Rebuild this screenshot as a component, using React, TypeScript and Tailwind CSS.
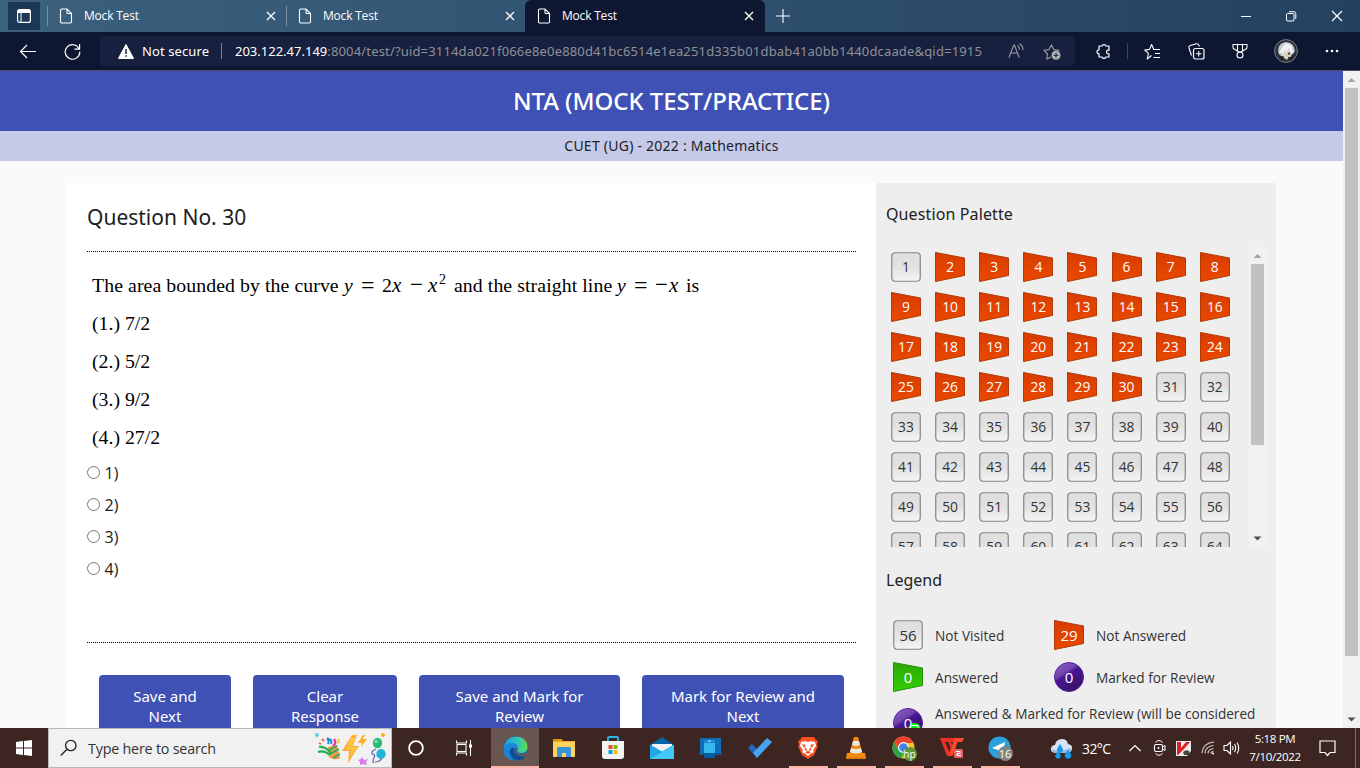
import React from "react";

const UI = "font-['Open_Sans','Noto_Sans',sans-serif]";
const NOTO = "font-['Noto_Sans','Open_Sans',sans-serif]";

type IconProps = { w: number; h: number; className?: string; children: React.ReactNode };

function Icon({ w, h, className = "", children }: IconProps) {
  return (
    <svg width={w} height={h} viewBox={`0 0 ${w} ${h}`} fill="none" className={`shrink-0 ${className}`}>
      {children}
    </svg>
  );
}

function Close() {
  return (
    <Icon w={10} h={10}>
      <path d="M1 1l8 8M9 1l-8 8" stroke="#fff" strokeWidth="1.3" />
    </Icon>
  );
}

function Tab({ active = false }: { active?: boolean }) {
  return (
    <div
      className={`flex h-8 items-center ${
        active ? "w-[240px] rounded-t-md bg-[#0e1731] pl-3 pr-[11px]" : "w-[239px] pl-3 pr-[10px]"
      }`}
    >
      <Icon w={14} h={16}>
        <path d="M1.5 2.2q0-1.2 1.2-1.2H8l4.5 4.5v8.3q0 1.2-1.2 1.2H2.7q-1.2 0-1.2-1.2zM8 1v3.5q0 1 1 1h3.5" stroke="#fff" strokeWidth="1.1" />
      </Icon>
      <span className={`ml-[11px] flex-1 whitespace-nowrap text-[12px] tracking-[-0.2px] text-white ${UI}`}>Mock Test</span>
      <Close />
    </div>
  );
}

function TabSeparator() {
  return <div className="-ml-px h-5 w-px self-center bg-[#7890a3]" />;
}

function TabStrip() {
  return (
    <div className="flex h-8 items-center bg-gradient-to-r from-[#3b617e] to-[#244260]">
      <div className="mb-0.5 ml-2 flex h-7 w-8 items-center justify-center self-end bg-[#1b3857]">
        <Icon w={14} h={14}>
          <rect x=".6" y=".6" width="12.8" height="12.8" rx="2" stroke="#fff" strokeWidth="1.2" />
          <path d="M1 1h12v3H1z" fill="#fff" />
          <path d="M4 4v9" stroke="#fff" />
        </Icon>
      </div>
      <div className="ml-[7px] flex items-center">
        <div className="-mr-px h-5 w-px bg-[#7890a3]" />
        <Tab />
        <div className="-mr-px h-5 w-px bg-[#7890a3]" />
        <Tab />
        <Tab active />
      </div>
      <Icon w={14} h={14} className="ml-[11px]">
        <path d="M7 0v14M0 7h14" stroke="#fff" strokeWidth="1.1" />
      </Icon>
      <div className="ml-auto flex items-center pr-[17px]">
        <Icon w={10} h={12} className="mr-[35px]">
          <path d="M0 6.5h10" stroke="#fff" />
        </Icon>
        <Icon w={11} h={11} className="mr-[34px]">
          <rect x=".5" y="2.5" width="7.5" height="7.5" rx="1" stroke="#fff" />
          <path d="M3 .7h4.8q2 0 2 2V8" stroke="#fff" />
        </Icon>
        <Icon w={12} h={12}>
          <path d="M1 1l10 10M11 1L1 11" stroke="#fff" strokeWidth="1.2" />
        </Icon>
      </div>
    </div>
  );
}

function AddressBar() {
  return (
    <div className="flex h-[30px] w-[975px] items-center rounded bg-[#17213f]">
      <Icon w={16} h={15} className="ml-[18px]">
        <path d="M8 .5L15.6 14.5H.4z" fill="#fff" stroke="#fff" strokeLinejoin="round" />
        <path d="M8 5v5M8 11.3v1.5" stroke="#17213f" strokeWidth="1.5" />
      </Icon>
      <span className={`ml-2 w-[67px] whitespace-nowrap pt-px text-[13px] tracking-[0.1px] text-white ${NOTO}`}>Not secure</span>
      <div className="ml-3 h-4 w-px bg-[#7a8092]" />
      <span className={`ml-[13px] w-[748px] whitespace-nowrap pt-px text-[13px] tracking-[0.165px] text-[#8f9098] ${NOTO}`}>
        <span className="tracking-normal text-white">203.122.47.149</span>
        :8004/test/?uid=3114da021f066e8e0e880d41bc6514e1ea251d335b01dbab41a0bb1440dcaade&amp;qid=1915
      </span>
      <Icon w={17} h={16} className="ml-[25px]">
        <path d="M1 14.5L5.8 2h.6l4.8 12.5M2.8 10h6.5M9.5 2.5q2 1.500 2 4M11.500 .8q3.500 2.200 3.500 6.200" stroke="#9a9ca3" strokeWidth="1.1" />
      </Icon>
      <Icon w={18} h={18} className="ml-[18px]">
        <path d="M8 15l-4.300 2 .8-5L1 8.300l4.900-.7L8.500 3l2.300 4.600 5 .7-1.300 1" stroke="#9a9ca3" strokeWidth="1.1" strokeLinejoin="round" />
        <circle cx="13" cy="13.300" r="4.500" fill="#b1b1b5" />
        <path d="M13 10.800v5M10.500 13.300h5" stroke="#17213f" />
      </Icon>
    </div>
  );
}

function Toolbar() {
  return (
    <div className="flex h-[39px] items-center border-b border-[#4b5060] bg-[#0e1731]">
      <Icon w={17} h={15} className="ml-[19px]">
        <path d="M17 7.500H1.500M8 1L1.500 7.500 8 14" stroke="#fff" strokeWidth="1.200" />
      </Icon>
      <Icon w={17} h={17} className="ml-7">
        <path d="M15.200 6A7.300 7.300 0 1 0 15.800 8.700M15.600 1v5.200h-5.200" stroke="#fff" strokeWidth="1.200" />
      </Icon>
      <div className="ml-[19px]">
        <AddressBar />
      </div>
      <Icon w={16} h={17} className="ml-5">
        <path
          d="M4 3h3.100a2 2 0 0 1 3.800 0H14v4.200h-.7a1.800 1.800 0 0 0 0 3.600H14V14h-3.200a1.900 1.900 0 0 1-3.700 0H4v-3.200a2 2 0 0 1 0-4z"
          stroke="#fff" strokeWidth="1.200" strokeLinejoin="round"
        />
      </Icon>
      <div className="ml-4 h-4 w-px bg-[#3b425b]" />
      <Icon w={17} h={17} className="ml-4">
        <path d="M7.500 12.500L3.200 16l1.200-5.600L.8 7l4.700-.6L7.600 1.500l2 4.400M9 6.500h7M11 10.500h5M9.500 14.500H16" stroke="#fff" strokeWidth="1.100" strokeLinejoin="round" />
      </Icon>
      <Icon w={17} h={17} className="ml-[27px]">
        <rect x="5.500" y="5.500" width="10.500" height="10.500" rx="2" stroke="#fff" strokeWidth="1.200" />
        <path d="M10.750 8v5.500M8 10.750h5.500M3.500 12.500L1 5q-.5-1.800 1.200-2.500L8.500.8q1.800-.3 2.500 1.700l.3 1" stroke="#fff" strokeWidth="1.100" />
      </Icon>
      <Icon w={16} h={16} className="ml-[27px]">
        <path d="M1 1.500h14v3q0 1-1 1.500L8 9.500 2 6Q1 5.500 1 4.500zM5.500 1.500v6M10.500 1.500v6" stroke="#fff" strokeWidth="1.100" strokeLinejoin="round" />
        <circle cx="8" cy="12" r="3" stroke="#fff" strokeWidth="1.100" />
      </Icon>
      <Icon w={24} h={24} className="ml-[26px]">
        <circle cx="12" cy="12" r="11.400" fill="#2a333b" stroke="#7d7f83" />
        <path d="M4 12q0-8 8-9 8 .5 9 9l-3 3-1 3-10-1-2-2z" fill="#c3c8ca" />
        <path d="M9 12q4-3 7 0l-1 5-2 4-3-2z" fill="#d9cfba" />
        <path d="M11 4L6 12l-1 3 3-2 1 4 2-6 2 4 1-6 3 6 3-1-3-8z" fill="#eeeff0" />
        <path d="M14 15l2-1" stroke="#4b2e28" strokeWidth="1.500" />
        <path d="M5 17l3 1 1 4zM18 17l-3 5 4-3z" fill="#141a1f" />
      </Icon>
      <Icon w={14} h={4} className="ml-[27px]">
        <circle cx="2" cy="2" r="1.300" fill="#fff" />
        <circle cx="7" cy="2" r="1.300" fill="#fff" />
        <circle cx="12" cy="2" r="1.300" fill="#fff" />
      </Icon>
    </div>
  );
}

type Kind = "plain" | "red" | "green" | "violet";

function Badge({ kind, value, tick = false, large = false }: { kind: Kind; value: number; tick?: boolean; large?: boolean }) {
  return (
    <div className="relative h-[30px] w-[30px]">
      <svg width="30" height="30" viewBox="0 0 30 30" className="absolute inset-0">
        <defs>
          <linearGradient id="gPlain" x1="0" y1="0" x2="0" y2="1">
            <stop offset="0" stopColor="#dedede" />
            <stop offset=".5" stopColor="#e2e2e2" />
            <stop offset="1" stopColor="#f4f4f4" />
          </linearGradient>
          <linearGradient id="gRed" x1="0" y1="0" x2="0" y2="1">
            <stop offset="0" stopColor="#d83c00" />
            <stop offset="1" stopColor="#ea4900" />
          </linearGradient>
          <linearGradient id="gGreen" x1="0" y1="0" x2="0" y2="1">
            <stop offset="0" stopColor="#2da804" />
            <stop offset="1" stopColor="#32cf04" />
          </linearGradient>
          <linearGradient id="gViolet" x1="0" y1="0" x2=".65" y2="1">
            <stop offset="0" stopColor="#8d68c4" />
            <stop offset=".4" stopColor="#7243ad" />
            <stop offset=".5" stopColor="#481493" />
            <stop offset="1" stopColor="#381464" />
          </linearGradient>
        </defs>
        {kind === "plain" && <rect x=".75" y=".75" width="28.500" height="28.500" rx="3.500" fill="url(#gPlain)" stroke="#868686" strokeWidth="1.200" />}
        {kind === "red" && <path d="M.5.5L29.500 6v17.500L.5 29.500z" fill="url(#gRed)" stroke="#b03904" />}
        {kind === "green" && <path d="M.5.5L29.500 6v17.500L.5 29.500z" fill="url(#gGreen)" stroke="#249306" />}
        {kind === "violet" && <circle cx="15" cy="15" r="14.500" fill="url(#gViolet)" stroke="#5420ab" />}
        {tick && (
          <g>
            <ellipse cx="21.500" cy="20" rx="6" ry="5" fill="#05ee13" />
            <path d="M19 17.500h6v3h-6" stroke="#fff" fill="none" />
          </g>
        )}
      </svg>
      <span
        className={`absolute inset-0 flex items-center justify-center ${large ? "text-[15px]" : "pt-px text-[13.800px]"} ${UI} ${
          kind === "plain" ? "text-[#333]" : "font-medium text-white"
        }`}
      >
        {value}
      </span>
    </div>
  );
}

function Arrow({ up = false, dark = false }: { up?: boolean; dark?: boolean }) {
  return (
    <Icon w={17} h={17}>
      <path d={up ? "M4.500 11h8L8.500 7z" : "M4.500 6.500h8l-4 4z"} fill={dark ? "#505050" : "#a3a3a3"} />
    </Icon>
  );
}

function Question() {
  const buttons = [
    { first: "Save and", second: "Next", width: "w-[132px]" },
    { first: "Clear", second: "Response", width: "w-[144px]" },
    { first: "Save and Mark for", second: "Review", width: "w-[201px]" },
    { first: "Mark for Review and", second: "Next", width: "w-[202px]" },
  ];
  return (
    <section className="h-[560px] w-[809px] bg-white px-5">
      <h2 className={`flex h-[68px] items-center text-[21px] leading-7 text-[#212121] ${NOTO}`}>
        <span className="whitespace-nowrap">Question No. 30</span>
      </h2>
      <div className="border-t border-dotted border-black" />
      <div className="flex flex-col pb-px pl-[5px] pt-[14px] font-['Liberation_Serif','Times_New_Roman',serif] text-[19.800px] leading-[38px] text-black">
        <p className="flex whitespace-nowrap">
          <span className="w-[252px] tracking-[0.080px]">The area bounded by the curve</span>
          <i className="w-[17px]">y</i>
          <span className="w-[21px] text-[24px]">=</span>
          <span className="w-[10px]">2</span>
          <i className="w-[18px] text-[21px]">x</i>
          <span className="w-[18px] text-[23px]">−</span>
          <i className="w-[11px] text-[21px]">x</i>
          <span className="w-[15px] pb-[10px] text-[14px] leading-[28px]">2</span>
          <span className="w-[163px] tracking-[0.080px]">and the straight line</span>
          <i className="w-[17px]">y</i>
          <span className="w-[21px] text-[24px]">=</span>
          <span className="w-[14px] text-[23px]">−</span>
          <i className="w-[17px] text-[21px]">x</i>
          <span>is</span>
        </p>
        <p>(1.) 7/2</p>
        <p>(2.) 5/2</p>
        <p>(3.) 9/2</p>
        <p>(4.) 27/2</p>
      </div>
      <div className="-mt-px h-[186px]">
        {[1, 2, 3, 4].map((n) => (
          <label key={n} className={`flex h-8 items-center text-[16px] text-[#212121] ${UI}`}>
            <span className="mr-[4.500px] h-[13px] w-[13px] rounded-full border border-[#767676] bg-white" />
            <span className="pt-0.5">{n})</span>
          </label>
        ))}
      </div>
      <div className="border-t border-dotted border-black" />
      <div className="flex justify-between pl-3 pr-3 pt-8">
        {buttons.map((b) => (
          <button
            key={b.first}
            className={`flex h-16 flex-col items-center rounded bg-[#3f51b5] pt-[11px] text-[15px] leading-5 text-white ${b.width} ${NOTO}`}
          >
            <span className="whitespace-nowrap">{b.first}</span>
            <span>{b.second}</span>
          </button>
        ))}
      </div>
    </section>
  );
}

function LegendItem({ kind, value, label }: { kind: Kind; value: number; label: string }) {
  return (
    <div className="flex h-[42px] items-center gap-3">
      <Badge kind={kind} value={value} large />
      <span className="whitespace-nowrap pt-0.5 text-[13.650px] text-[#333]">{label}</span>
    </div>
  );
}

function Palette() {
  return (
    <aside className={`h-[560px] w-[400px] bg-[#eee] ${UI}`}>
      <h3 className={`flex h-16 items-center pb-0.5 pl-[10px] text-[16px] tracking-[0.120px] text-[#212121] ${NOTO}`}>Question Palette</h3>
      <div className="flex h-[300px] overflow-hidden pl-[15px]">
        <div className="grid w-[352.900px] shrink-0 auto-rows-[40px] grid-cols-8 pt-[5px]">
          {Array.from({ length: 64 }, (_, i) => i + 1).map((n) => (
            <Badge key={n} value={n} kind={n >= 2 && n <= 30 ? "red" : "plain"} />
          ))}
        </div>
        <div className="ml-[5px] flex h-[300px] w-[17px] flex-col items-center bg-[#f1f1f1]">
          <Arrow up />
          <div className="h-[181px] w-[13px] bg-[#c1c1c1]" />
          <div className="mt-auto">
            <Arrow dark />
          </div>
        </div>
      </div>
      <h3 className={`flex h-[67px] items-center pb-0.5 pl-[10px] text-[16px] text-[#212121] ${NOTO}`}>Legend</h3>
      <div className="flex pl-[17px]">
        <div className="w-[161px]">
          <LegendItem kind="plain" value={56} label="Not Visited" />
          <LegendItem kind="green" value={0} label="Answered" />
        </div>
        <div>
          <LegendItem kind="red" value={29} label="Not Answered" />
          <LegendItem kind="violet" value={0} label="Marked for Review" />
        </div>
      </div>
      <div className="flex gap-3 pl-[17px] pt-[5px]">
        <div className="pt-[5px]">
          <Badge kind="violet" value={0} tick large />
        </div>
        <p className="whitespace-nowrap pt-px text-[13.620px] leading-5 text-[#333]">
          Answered &amp; Marked for Review (will be considered
          <br />
          for evaluation)
        </p>
      </div>
    </aside>
  );
}

function Page() {
  return (
    <div className="flex h-[657px] overflow-hidden bg-[#fafafa]">
      <div className="w-[1343px]">
        <header className={`flex h-[60px] items-center justify-center bg-[#3f51b5] text-[24px] font-medium tracking-[-0.060px] text-white ${NOTO}`}>
          <span className="whitespace-nowrap">NTA (MOCK TEST/PRACTICE)</span>
        </header>
        <div className={`flex h-[30px] items-center justify-center bg-[#c5cae9] pb-0.5 text-[14px] tracking-[0.240px] text-[#212121] ${NOTO}`}>
          CUET (UG) - 2022 : Mathematics
        </div>
        <main className="flex pl-[67px] pt-[22px]">
          <Question />
          <Palette />
        </main>
      </div>
      <div className="flex w-[17px] flex-col items-center bg-[#f1f1f1]">
        <Arrow up />
        <div className="h-[568px] w-[13px] bg-[#c1c1c1]" />
        <div className="mt-auto">
          <Arrow dark />
        </div>
      </div>
    </div>
  );
}

function AppSlot({ children, running = false, active = false, spaced = false }: { children: React.ReactNode; running?: boolean; active?: boolean; spaced?: boolean }) {
  return (
    <div className={`flex h-10 w-12 flex-col items-center ${active ? "bg-[#695650]" : ""} ${spaced ? "ml-px" : ""}`}>
      <div className="flex h-[38px] items-center justify-center pt-0.5">{children}</div>
      {running && <div className={`h-0.5 bg-[#ffb5a7] ${active ? "w-12" : "w-[39px]"}`} />}
    </div>
  );
}

function PartyArt() {
  return (
    <Icon w={72} h={36}>
      <path d="M14 17l9-2 3 13q-5 3-11-1z" fill="#ef9b38" />
      <path d="M15 20l8-4M16 24l9-5M19 28l7-4" stroke="#23a97c" strokeWidth="1.500" />
      <path d="M5 17q5-1 9 3l3 3M4 22q6-2 12 3" stroke="#22b14c" strokeWidth="2.200" />
      <path d="M13 8q3 1 1 6M13 10q6-2 4 4" stroke="#2389dd" strokeWidth="2" />
      <path d="M19 16q4-3 1-7" stroke="#ee3f98" strokeWidth="2.300" />
      <path d="M8 9l2 2M5 13l2 1" stroke="#f35d57" strokeWidth="1.800" />
      <path d="M24 9l1 2M23 13l3-1" stroke="#f7c52b" strokeWidth="1.800" />
      <circle cx="3" cy="5" r="2" fill="#5ecce4" />
      <path d="M38 5L28 21h7l-1 12 11-17h-6l4-11z" fill="#ffac2f" />
      <path d="M37 8h5l-4 9h5l-7 10 2-7h-6z" fill="#ffc545" />
      <path d="M49 5l-5 8h4l-1 4 6-8h-4l2-4z" fill="#ffad26" />
      <path d="M48 27l2 3 4-1-2 3 1 3-4-1-3 1v-3l-2-2 3-1z" fill="#db7af0" />
      <path d="M62 19q-5 2-4 5 4 0 2 4t0 5M68 28q-2 4-7 4" stroke="#6657b8" strokeWidth="1.200" />
      <ellipse cx="63.500" cy="13" rx="4.700" ry="5.200" fill="#29bd77" />
      <ellipse cx="67" cy="24" rx="4.700" ry="5" fill="#20b5d8" />
      <circle cx="62" cy="11.500" r="1.600" fill="#9fe4bd" />
      <circle cx="69" cy="5" r="2" fill="#ffab19" />
    </Icon>
  );
}

function Taskbar() {
  return (
    <div className={`flex h-10 items-center bg-[#3d2622] text-white ${UI}`}>
      <div className="flex w-12 justify-center">
        <Icon w={16} h={16}>
          <path d="M0 2l7-1v6.500H0zM8 .9L16 0v7.500H8zM0 8.500h7V15l-7-1zM8 8.500h8V16l-8-.9z" fill="#fff" />
        </Icon>
      </div>
      <div className="flex h-10 w-[344px] items-center border border-[#b9b9b9] bg-[#f1f1f1] pl-[11px]">
        <Icon w={18} h={18}>
          <circle cx="10.800" cy="6.500" r="5.200" stroke="#222" strokeWidth="1.300" />
          <path d="M7 10.200L.8 16.500" stroke="#222" strokeWidth="1.300" />
        </Icon>
        <span className="ml-[10px] w-[129px] whitespace-nowrap pt-px text-[14.300px] tracking-[-0.200px] text-[#333]">Type here to search</span>
        <div className="ml-auto pr-[5px]">
          <PartyArt />
        </div>
      </div>
      <div className="flex">
        <AppSlot>
          <Icon w={18} h={18}>
            <circle cx="9" cy="9" r="6.900" stroke="#fff" strokeWidth="1.800" />
          </Icon>
        </AppSlot>
        <AppSlot>
          <Icon w={18} h={18}>
            <path d="M1.500 1.500V4h10V1.500M1.500 16.500V14h10v2.500" stroke="#fff" strokeWidth="1.100" />
            <rect x="2" y="5.500" width="9" height="7" stroke="#fff" strokeWidth="1.100" />
            <path d="M15.500 1v16" stroke="#fff" strokeWidth="1.100" />
            <path d="M14 5.500h3v3h-3z" fill="#fff" />
          </Icon>
        </AppSlot>
        <div className="ml-[3px] flex">
          <AppSlot running active>
            <Icon w={25} h={25}>
              <defs>
                <linearGradient id="edgeTop" x1="0" y1="0" x2="1" y2="0">
                  <stop stopColor="#1f9ee0" />
                  <stop offset=".55" stopColor="#2ac3c4" />
                  <stop offset="1" stopColor="#62dc4d" />
                </linearGradient>
              </defs>
              <circle cx="12.500" cy="12.500" r="12" fill="#1268b8" />
              <path d="M1 10Q4 .5 13 .5 24 1 24.500 11q0 6-7 6-4-.5-3-3 1-5-5-5-6 0-8.500 6z" fill="url(#edgeTop)" />
              <path d="M.500 12Q3 7 9 7q6 0 6 6l-1 2q-1-4-5-3-5 2-2 8 1 3 4 4.500Q0 23 .500 12z" fill="#1b86d6" />
              <path d="M9 12q-3 2-1 6 2 6 9 6 4-1 6-4-7 2-11-2-2-2-1-6z" fill="#114a8b" />
              <path d="M13 11.500q2 2 .8 4 1 2.500 5 2.500 2 0 5.500-1.500l1 2-2 1.500q-7 1-10-2.500-2-3-.3-6z" fill="#695650" />
            </Icon>
          </AppSlot>
          <AppSlot spaced>
            <Icon w={24} h={20}>
              <path d="M1 1h8l2 2h12v16H1z" fill="#f2ae22" />
              <path d="M1 4h22v15H1z" fill="#ffd35e" />
              <path d="M1 1h8l2 2H1z" fill="#dc9510" />
              <path d="M5 19v-9q0-1 1-1h12q1 0 1 1v9h-5v-4h-4v4z" fill="#3995d9" />
            </Icon>
          </AppSlot>
          <AppSlot spaced>
            <Icon w={24} h={24}>
              <path d="M7 6V2q0-1 1-1h8q1 0 1 1v4" stroke="#2ab6e8" strokeWidth="1.800" />
              <path d="M1 5h22v15q0 3-3 3H4q-3 0-3-3z" fill="#f3f3f3" />
              <path d="M7.500 9h4v4h-4z" fill="#f04e24" />
              <path d="M12.500 9h4v4h-4z" fill="#7cb90a" />
              <path d="M7.500 14h4v4h-4z" fill="#00a2eb" />
              <path d="M12.500 14h4v4h-4z" fill="#fdb813" />
            </Icon>
          </AppSlot>
          <AppSlot spaced>
            <Icon w={26} h={24}>
              <path d="M1 9L13 1l12 8v13H1z" fill="#0864a8" />
              <path d="M3 8h20v8H3z" fill="#f2f3f5" />
              <path d="M1 8.500l12 7 12-7V23H1z" fill="#20a7e8" />
              <path d="M1 23l24-14v14z" fill="#43c5f5" />
            </Icon>
          </AppSlot>
          <AppSlot spaced>
            <Icon w={24} h={24}>
              <path d="M1 2h21v15H1z" fill="#0b6eb8" />
              <path d="M0 17h23v2H0z" fill="#0a5798" />
              <path d="M5 4h11v18H5z" fill="#36b8ef" />
              <path d="M5 4h11v3H5z" fill="#1d8bd0" />
              <path d="M9 5h3" stroke="#d5f4ff" />
              <path d="M5 17h11v5H5z" fill="#075a9c" />
            </Icon>
          </AppSlot>
          <AppSlot spaced>
            <Icon w={26} h={22}>
              <path d="M1 11l4-4 9 9-4 5z" fill="#2563bd" />
              <path d="M6 16L20 1l5 4-15 16z" fill="#48a3f0" />
            </Icon>
          </AppSlot>
          <AppSlot running>
            <Icon w={22} h={24}>
              <path d="M5 1h12l2 3 2 1-1 4 1 1-4 9-6 4-6-4L1 10l1-1-1-4 2-1z" fill="#fb4f20" />
              <path d="M4 6l4-1 3 1 3-1 4 1 1 4-3 4 1 2-4 2-2 2-2-2-4-2 1-2-3-4z" fill="#fff" />
              <path d="M5 8l4 1-2 3zM17 8l-4 1 2 3zM8.500 11l2 4-3-1zM13.500 11l-2 4 3-1zM8 16l3-1 3 1-3 2z" fill="#fb4f20" />
            </Icon>
          </AppSlot>
          <AppSlot running>
            <Icon w={22} h={24}>
              <path d="M2 17h18l1 6H1z" fill="#f59016" />
              <path d="M9 1h4l5 18q-7 3-14 0z" fill="#f58a10" />
              <path d="M8 5h6l1 4q-4 2-8 0zM6 12q5 2 10 0l1 4q-6 3-12 0z" fill="#e8e8e8" />
              <path d="M1 22h20" stroke="#cd6709" />
            </Icon>
          </AppSlot>
          <AppSlot running>
            <div className="relative h-[25px] w-[25px]">
              <Icon w={25} h={25}>
                <circle cx="11.500" cy="11.500" r="11" fill="#f6c521" />
                <path d="M2 6A11 11 0 0 1 21.500 7H11.500L7 14z" fill="#e64336" />
                <path d="M2 6l5 8 4.500 3-2 5.300A11 11 0 0 1 2 6z" fill="#2ba24c" />
                <circle cx="11.500" cy="11.500" r="5.400" fill="#fff" />
                <circle cx="11.500" cy="11.500" r="4.300" fill="#3e82ea" />
                <circle cx="18" cy="18" r="7" fill="#629535" />
              </Icon>
              <span className="absolute bottom-0 right-0 flex h-[14px] w-[14px] items-center justify-center text-[10px] leading-none">hp</span>
            </div>
          </AppSlot>
          <AppSlot running>
            <Icon w={25} h={22}>
              <path d="M0 1h24l-2 4h-4.500l-5 14H7z" fill="#ef2f26" />
              <path d="M5 5h3.500l2 6-1.200 4zM11 5h2.500l-1.300 3.500z" fill="#3d2622" />
              <path d="M14.500 1H24l-2 4h-4.500l-5 14H9z" fill="#fb4a2c" />
              <rect x="14" y="12" width="9" height="9" rx="1.500" fill="#e56267" />
              <path d="M16 14.500h4v2h-3v2h4" stroke="#fff" />
            </Icon>
          </AppSlot>
          <AppSlot running>
            <div className="relative h-[25px] w-[25px]">
              <Icon w={25} h={25}>
                <circle cx="11.500" cy="11.500" r="11" fill="#2aa1dc" />
                <path d="M4 12l13-6-2 10-5-2z" fill="#fff" />
                <circle cx="17.500" cy="17.500" r="7.500" fill="#818384" />
              </Icon>
              <span className="absolute bottom-0 right-0 flex h-[15px] w-[15px] items-center justify-center text-[11px] leading-none">16</span>
            </div>
          </AppSlot>
        </div>
      </div>
      <Icon w={23} h={21} className="ml-[26px]">
        <path d="M5 15q-5-1-4-5 1-3 4-3 1-6 7-6 5 0 6 5 5 1 4 5-1 4-5 4z" fill="#d4e2f2" />
        <path d="M2 11q7 4 19-1 0 5-4 5H5q-3-1-3-4z" fill="#9bb9da" />
        <path d="M10 6l2.500 4a3 3 0 1 1-5 0zM8 13l2.300 3.500a2.700 2.700 0 1 1-4.600 0zM18 11.500l3 4.500a3.300 3.300 0 1 1-6 0z" fill="#159cee" />
      </Icon>
      <span className="ml-[9px] w-[30px] whitespace-nowrap text-[14px] tracking-[-0.600px]">32°C</span>
      <Icon w={12} h={8} className="ml-[17px]">
        <path d="M.5 7L6 1.500 11.500 7" stroke="#fff" strokeWidth="1.200" />
      </Icon>
      <Icon w={14} h={18} className="ml-[12px]">
        <path d="M2.500 3.500Q6-.5 9.500 3.500M2.500 14.500Q6 18 9.500 14.500" stroke="#fff" />
        <rect x="1.500" y="5.500" width="8" height="7" rx="1.500" stroke="#fff" strokeWidth="1.100" />
        <path d="M9.500 8l2.500-1.500v5L9.500 10" stroke="#fff" />
        <circle cx="5.500" cy="9" r="1" fill="#fff" />
      </Icon>
      <Icon w={15} h={15} className="ml-[9px]">
        <path d="M0 0h15v10l-4 5H0z" fill="#ececec" />
        <path d="M1 1h4v6l5-6h4L8 8l-6 6H1z" fill="#db2227" />
        <path d="M7 11q3-3 6-1l1 4H8z" fill="#45433e" />
      </Icon>
      <Icon w={14} h={14} className="ml-[10px]">
        <path d="M1 12Q2 2 13 1M4 12.500Q4 5.500 12.500 4.500M7 12.500Q7 8.500 12.500 7.500M10 12.500q0-2 2.500-2" stroke="#d6cfcd" strokeWidth="1.200" />
        <circle cx="12" cy="12.500" r="1" fill="#fff" />
      </Icon>
      <Icon w={18} h={14} className="ml-[8px]">
        <path d="M1 4.500h3L7.500 1v12L4 9.500H1zM9.500 5q1.200 2 0 4M11.500 3q2.500 4 0 8M14 1.500q3.500 5.500 0 11" stroke="#fff" strokeWidth="1.100" />
      </Icon>
      <div className="ml-[7px] flex w-[54px] flex-col items-center whitespace-nowrap text-[11.500px] leading-[18px] tracking-[-0.350px]">
        <span>5:18 PM</span>
        <span>7/10/2022</span>
      </div>
      <Icon w={17} h={17} className="ml-[17px]">
        <path d="M1 1h15v11.500h-5L8.500 15.500 6 12.500H1z" stroke="#fff" strokeWidth="1.200" />
      </Icon>
      <div className="ml-auto mr-1 h-10 w-px bg-[#806c68]" />
    </div>
  );
}

export default function App() {
  return (
    <div className="flex h-[768px] w-[1360px] flex-col overflow-hidden">
      <TabStrip />
      <Toolbar />
      <Page />
      <Taskbar />
    </div>
  );
}
